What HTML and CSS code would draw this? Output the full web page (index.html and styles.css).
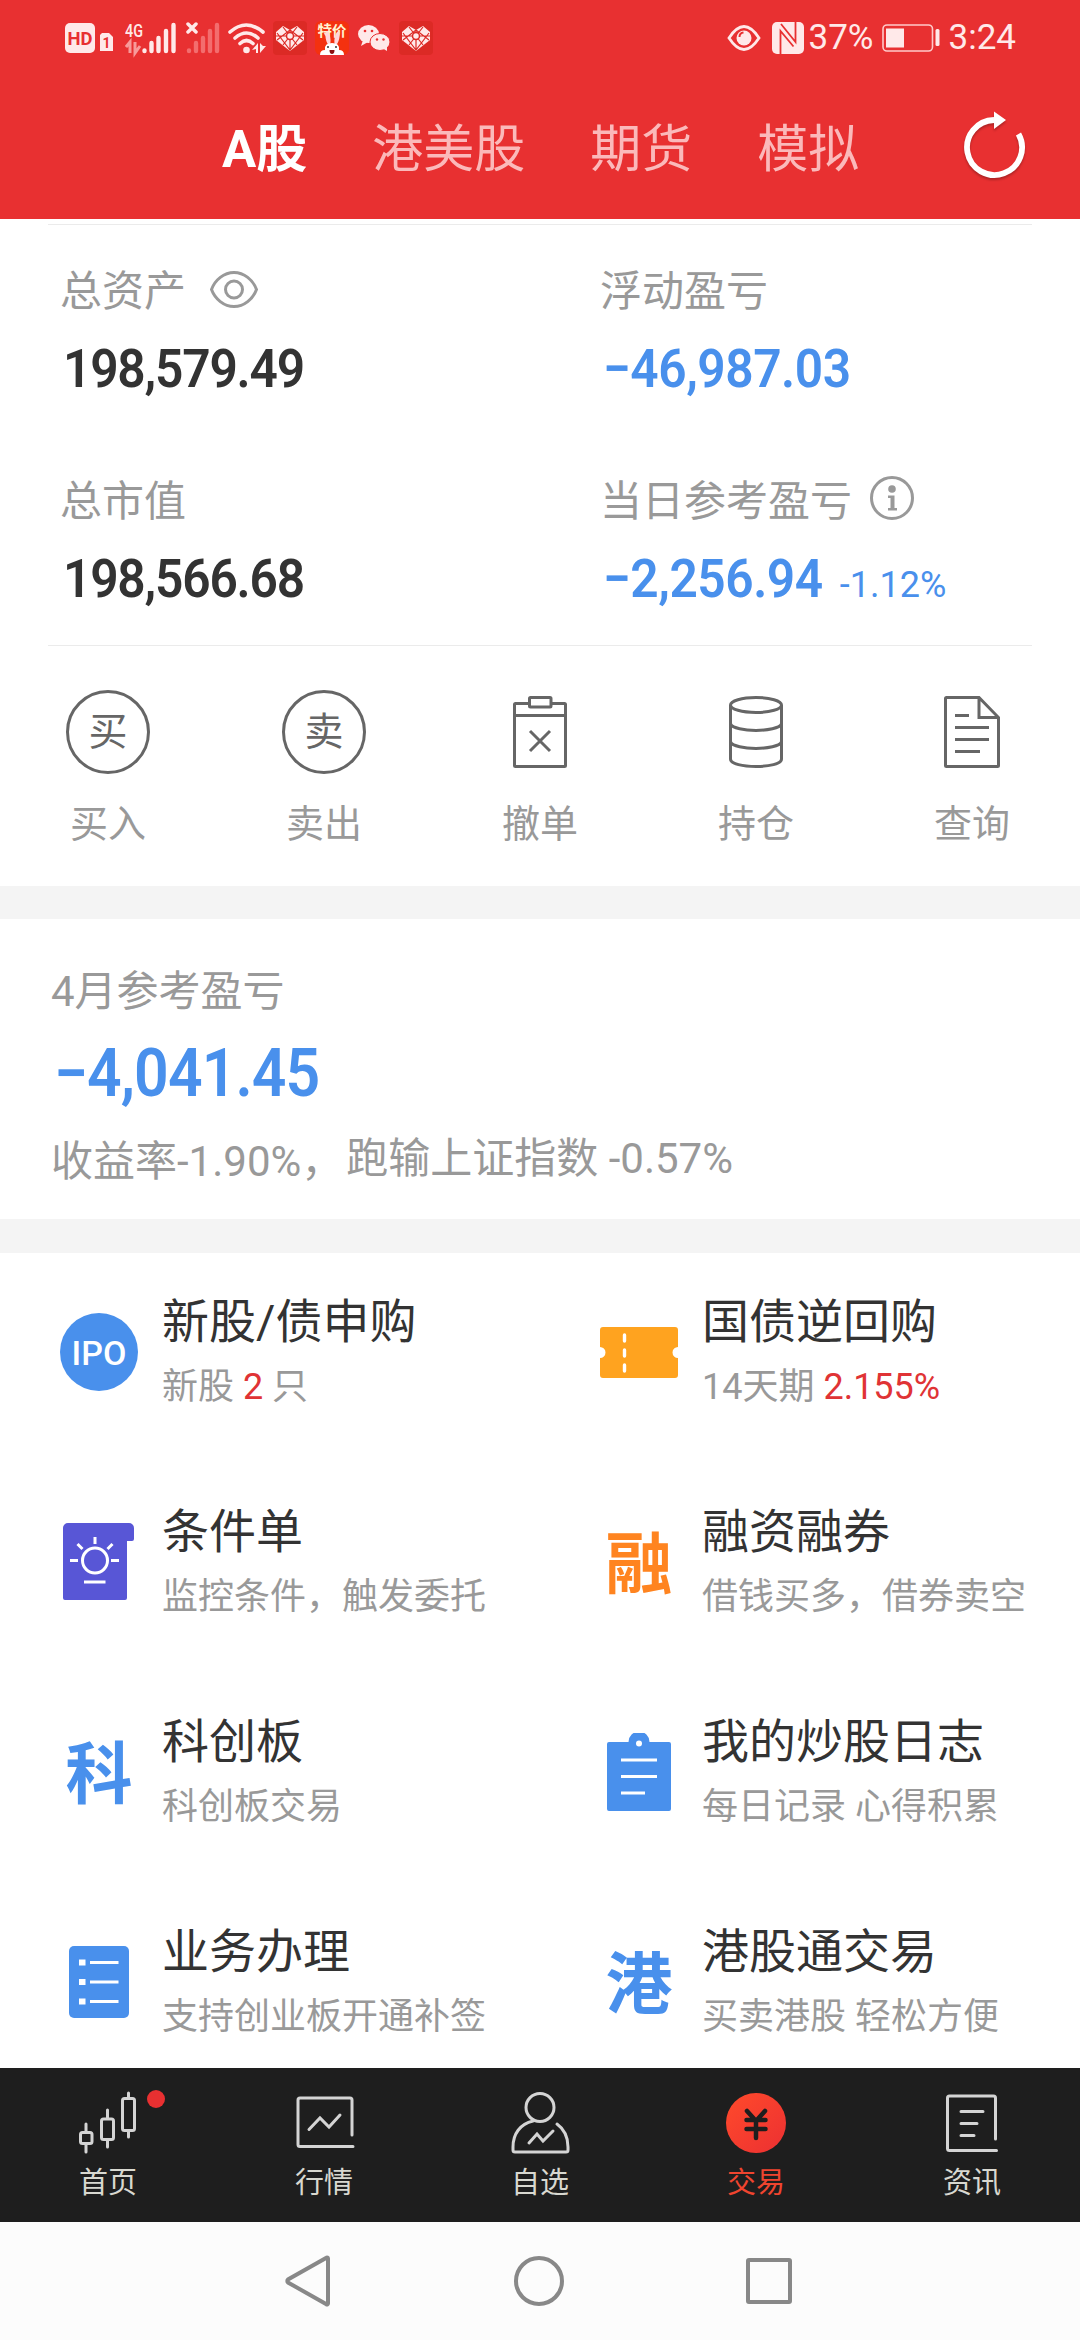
FILE: index.html
```html
<!DOCTYPE html>
<html lang="zh-CN">

<head>
    <meta charset="UTF-8" />
    <meta name="viewport" content="width=device-width, initial-scale=1.0" />
    <title>交易</title>
    <link rel="stylesheet" href="styles.css">
</head>

<body>
    <header class="header">
        <div class="status">
            <div class="status-left">
                <svg class="hd" width="48" height="36" viewBox="65 20 48 36">
                    <rect x="65" y="23" width="30" height="30" rx="5" fill="#ffe9e9" />
                    <text x="80" y="45" text-anchor="middle" font-size="19" font-weight="700" textLength="25" lengthAdjust="spacingAndGlyphs" fill="#e83031">HD</text>
                    <path d="M102 33h7l4 4v14h-13v-16z" fill="#ffe9e9" />
                    <text x="106.500" y="47.500" text-anchor="middle" font-size="14" font-weight="700" fill="#e83031">1</text>
                </svg>
                <svg class="signal" width="52" height="44" viewBox="125 15 52 44">
                    <text x="125" y="36" font-size="18" font-weight="500" textLength="18" lengthAdjust="spacingAndGlyphs" fill="#ffe9e9">4G</text>
                    <path d="M126 46l4-5v11M135 41v11l5-7" stroke="#f79a9a" stroke-width="3" fill="none" />
                    <path d="M144.500 49.500v.5M151.500 42v8M158.500 37v13M166 30v20M173.500 24v26" stroke="#ffe9e9" stroke-width="4.400" stroke-linecap="round" />
                </svg>
                <svg class="signal2" width="34" height="32" viewBox="186 21 34 32">
                    <path d="M188 23l8 8M196 23l-8 8" stroke="#ffe9e9" stroke-width="3.500" stroke-linecap="round" />
                    <path d="M189 49.500v.5M196 42v8M203 37v13M210 30v20M217 24v26" stroke="#f36d6e" stroke-width="4.400" stroke-linecap="round" />
                </svg>
                <svg class="wifi" width="38" height="32" viewBox="228 21 38 32">
                    <g fill="none" stroke="#ffe9e9" stroke-width="3.600" stroke-linecap="round">
                        <path d="M230 31q16-14 33 0M235 37q11.500-10 23 0M240 42.500q6.500-6 13 0" />
                    </g>
                    <circle cx="246.500" cy="49" r="3.300" fill="#ffe9e9" />
                    <path d="M252 49l6-7v10h-2v-4zM260 42v10l6-7h-3z" fill="#ffe9e9" />
                </svg>
                <svg class="heart" width="34" height="34" viewBox="0 0 34 34">
                    <rect width="34" height="34" rx="4" fill="#dc2a25" />
                    <path d="M10 5l7 4 7-4 7 6v8L17 30 3 19v-8z" fill="#ffe9e9" />
                    <path d="M10 6l14 18M24 6L10 24M4 12l13 17 13-17M3 15h28M17 9v20M4 19l13-10 13 10" stroke="#dc2a25" stroke-width="1.200" fill="none" />
                    <circle cx="17" cy="15" r="3.500" fill="#ffe9e9" stroke="#dc2a25" stroke-width="1.500" />
                </svg>
                <svg class="rabbit" width="34" height="34" viewBox="0 0 34 34">
                    <rect width="34" height="34" rx="6" fill="#f4310f" />
                    <text x="17" y="14.500" text-anchor="middle" font-size="14.500" font-weight="700" fill="#fff3d0">特价</text>
                    <ellipse cx="13" cy="17" rx="2.300" ry="7" fill="#ffd6da" transform="rotate(-10 13 17)" />
                    <ellipse cx="22" cy="17" rx="2.300" ry="7" fill="#ffd6da" transform="rotate(12 22 17)" />
                    <path d="M5 34q0-5 5-5-1-7 7-7t7 7q5 0 5 5z" fill="#fff" />
                    <circle cx="13" cy="26" r="1" fill="#333" />
                    <circle cx="21" cy="26" r="1" fill="#333" />
                    <path d="M14.500 29h5q0 4-2.500 4t-2.500-4z" fill="#8c1010" />
                </svg>
                <svg class="wechat" width="34" height="32" viewBox="357 22 34 32">
                    <ellipse cx="368.500" cy="34" rx="10.500" ry="9" fill="#ffe9e9" />
                    <path d="M363 40l-2 6 7-4z" fill="#ffe9e9" />
                    <ellipse cx="380" cy="42" rx="10" ry="8.500" fill="#ffe9e9" stroke="#e83031" stroke-width="1" />
                    <path d="M382 48l5 3v-5z" fill="#ffe9e9" />
                    <g fill="#e83031">
                        <circle cx="365" cy="31" r="1.300" />
                        <circle cx="372" cy="31" r="1.300" />
                        <circle cx="377" cy="39.500" r="1.200" />
                        <circle cx="383.500" cy="39.500" r="1.200" />
                    </g>
                </svg>
                <svg class="heart" width="34" height="34" viewBox="0 0 34 34">
                    <rect width="34" height="34" rx="4" fill="#dc2a25" />
                    <path d="M10 5l7 4 7-4 7 6v8L17 30 3 19v-8z" fill="#ffe9e9" />
                    <path d="M10 6l14 18M24 6L10 24M4 12l13 17 13-17M3 15h28M17 9v20M4 19l13-10 13 10" stroke="#dc2a25" stroke-width="1.200" fill="none" />
                    <circle cx="17" cy="15" r="3.500" fill="#ffe9e9" stroke="#dc2a25" stroke-width="1.500" />
                </svg>
            </div>
            <div class="status-right">
                <svg width="34" height="28" viewBox="0 0 34 28">
                    <path d="M2 14Q17-9 32 14 17 37 2 14z" fill="none" stroke="#ffe9e9" stroke-width="2.800" />
                    <circle cx="17" cy="14" r="7.500" fill="#ffe9e9" />
                    <path d="M12.500 13q0-4 4-4.500" fill="none" stroke="#e83031" stroke-width="2" />
                </svg>
                <svg class="nfc" width="32" height="32" viewBox="0 0 32 32">
                    <rect width="32" height="32" rx="5" fill="#ffe9e9" />
                    <path d="M8.500 32V9l13 15.500M23.500 0v20L9 2" fill="none" stroke="#e83031" stroke-width="1.800" />
                </svg>
                <span class="percent">37%</span>
                <svg class="battery" width="60" height="28" viewBox="0 0 60 28">
                    <rect x="1" y="1" width="49.500" height="26" rx="4" fill="none" stroke="#ffc9c9" stroke-width="1.600" />
                    <rect x="4" y="4.500" width="18" height="19" fill="#ffe9e9" />
                    <rect x="53.500" y="5" width="4" height="17" rx="1.500" fill="#ffe9e9" />
                </svg>
                <span class="time">3:24</span>
            </div>
        </div>
        <nav class="tabs">
            <a class="tab active">A股</a>
            <a class="tab">港美股</a>
            <a class="tab">期货</a>
            <a class="tab">模拟</a>
            <svg class="refresh" width="70" height="76" viewBox="959 110 70 76">
                <path d="M1017.500 134a27.500 27.500 0 1 1-24.500-14" fill="none" stroke="#fff" stroke-width="5.800" />
                <path d="M993 111.500l12 8.500-12 9z" fill="#fff" />
            </svg>
        </nav>
    </header>

    <section class="account">
        <div class="cell">
            <div class="label"><span>总资产</span>
                <svg class="eye" width="48" height="37" viewBox="0 0 48 37">
                    <path d="M1.500 18.500C5 9 14 1.500 24 1.500S43 9 46.500 18.500C43 28 34 35.500 24 35.500S5 28 1.500 18.500z" />
                    <circle cx="24" cy="18.500" r="8.500" />
                </svg>
            </div>
            <div class="num"><span>198,579.49</span></div>
        </div>
        <div class="cell">
            <div class="label"><span>浮动盈亏</span></div>
            <div class="num blue"><span>−46,987.03</span></div>
        </div>
        <div class="cell">
            <div class="label"><span>总市值</span></div>
            <div class="num"><span>198,566.68</span></div>
        </div>
        <div class="cell">
            <div class="label"><span>当日参考盈亏</span>
                <svg class="info" width="44" height="44" viewBox="0 0 44 44">
                    <circle cx="22" cy="22" r="20.500" />
                    <circle class="fill" cx="22" cy="13" r="3.800" />
                    <path class="fill" d="M18 19.500h6.500v12.500H27v2.500h-9V32h2.500v-10H18z" />
                </svg>
            </div>
            <div class="num blue"><span>−2,256.94</span><small>-1.12%</small></div>
        </div>
    </section>

    <section class="actions">
        <a class="action">
            <span class="round">买</span>
            <span>买入</span>
        </a>
        <a class="action">
            <span class="round">卖</span>
            <span>卖出</span>
        </a>
        <a class="action">
            <svg width="84" height="84" viewBox="498 690 84 84">
                <path d="M529.500 703.500H515.500a1 1 0 0 0-1 1V765.500a1 1 0 0 0 1 1h49a1 1 0 0 0 1-1V704.500a1 1 0 0 0-1-1H551.500M514.500 715.500h51" />
                <rect x="529.500" y="697.500" width="21.500" height="9.500" rx="1" />
                <path d="M530 731l20 20M550 731l-20 20" />
            </svg>
            <span>撤单</span>
        </a>
        <a class="action">
            <svg width="84" height="84" viewBox="714 690 84 84">
                <ellipse cx="756" cy="705" rx="25.500" ry="7.500" />
                <path d="M730.500 705v54c0 10 51 10 51 0v-54M730.500 724c4 8.500 47 8.500 51 0M730.500 742c4 8.500 47 8.500 51 0" />
            </svg>
            <span>持仓</span>
        </a>
        <a class="action">
            <svg width="84" height="84" viewBox="930 690 84 84">
                <path d="M979 697.500H946.500a1 1 0 0 0-1 1V765.500a1 1 0 0 0 1 1H997.500a1 1 0 0 0 1-1V717.500zV717.500H998.500M955 715.500h14M955 727.500h34M955 739.500h34M955 751.500h25" />
            </svg>
            <span>查询</span>
        </a>
    </section>

    <section class="month">
        <div class="month-label">4月参考盈亏</div>
        <div class="num big blue"><span>−4,041.45</span></div>
        <div class="month-text"><span class="yield">收益率-1.90%，</span><span>跑输上证指数 -0.57%</span></div>
    </section>

    <section class="services">
        <a class="item">
            <div class="icon"><span class="ipo">IPO</span></div>
            <div>
                <h3>新股/债申购</h3>
                <p>新股 <em>2</em> 只</p>
            </div>
        </a>
        <a class="item">
            <div class="icon">
                <svg width="78" height="51" viewBox="0 0 78 51">
                    <path d="M3 0h72a3 3 0 0 1 3 3v17a5.500 5.500 0 0 0 0 11v17a3 3 0 0 1-3 3H3a3 3 0 0 1-3-3V31a5.500 5.500 0 0 0 0-11V3a3 3 0 0 1 3-3z" fill="#ffa31f" />
                    <path d="M24.500 8v6M24.500 23v6M24.500 38v6" stroke="#fff" stroke-width="3.400" stroke-linecap="round" />
                </svg>
            </div>
            <div>
                <h3>国债逆回购</h3>
                <p>14天期 <em>2.155%</em></p>
            </div>
        </a>
        <a class="item">
            <div class="icon">
                <svg width="78" height="78" viewBox="60 1523 78 78">
                    <path d="M68 1523h61a5 5 0 0 1 5 5v11a2 2 0 0 1-2 2h-5v57a2 2 0 0 1-2 2H65a2 2 0 0 1-2-2v-70a5 5 0 0 1 5-5z" fill="#5856d6" />
                    <g fill="none" stroke="#fff" stroke-width="3">
                        <circle cx="95" cy="1560.500" r="12.500" />
                        <path d="M95 1537v7M70 1560.500h8M111 1560.500h8M77.500 1544l5 5M112.500 1544l-5 5M84 1582h21.500" />
                    </g>
                </svg>
            </div>
            <div>
                <h3>条件单</h3>
                <p>监控条件，触发委托</p>
            </div>
        </a>
        <a class="item">
            <div class="icon"><span class="glyph orange">融</span></div>
            <div>
                <h3>融资融券</h3>
                <p>借钱买多，借券卖空</p>
            </div>
        </a>
        <a class="item">
            <div class="icon"><span class="glyph">科</span></div>
            <div>
                <h3>科创板</h3>
                <p>科创板交易</p>
            </div>
        </a>
        <a class="item">
            <div class="icon">
                <svg width="78" height="78" viewBox="600 1733 78 78">
                    <path d="M609 1742h19.500a10.500 10.500 0 0 1 21 0H669a2 2 0 0 1 2 2v65a2 2 0 0 1-2 2h-60a2 2 0 0 1-2-2v-65a2 2 0 0 1 2-2z" fill="#4990ec" />
                    <circle cx="639" cy="1743.500" r="3" fill="#fff" />
                    <path d="M621 1760h36M621 1776.500h36M621 1793h24" stroke="#fff" stroke-width="3" />
                </svg>
            </div>
            <div>
                <h3>我的炒股日志</h3>
                <p>每日记录 心得积累</p>
            </div>
        </a>
        <a class="item">
            <div class="icon">
                <svg width="60" height="72" viewBox="0 0 60 72">
                    <rect width="60" height="72" rx="5" fill="#4990ec" />
                    <path d="M10 16.500h6.500M10 36h6.500M10 55.500h6.500" stroke="#fff" stroke-width="6" />
                    <path d="M21 16.500h28.500M21 36h28.500M21 55.500h28.500" stroke="#fff" stroke-width="3" />
                </svg>
            </div>
            <div>
                <h3>业务办理</h3>
                <p>支持创业板开通补签</p>
            </div>
        </a>
        <a class="item">
            <div class="icon"><span class="glyph">港</span></div>
            <div>
                <h3>港股通交易</h3>
                <p>买卖港股 轻松方便</p>
            </div>
        </a>
    </section>

    <nav class="tabbar">
        <a class="tabbar-item">
            <svg width="80" height="64" viewBox="68 2090 80 64">
                <path d="M86 2124v8M86 2144v8M107.500 2110v8M107.500 2140v7M128.500 2093v5M128.500 2131v6" />
                <rect x="80.500" y="2132.500" width="11.500" height="11" rx="2" />
                <rect x="101.500" y="2119" width="12" height="20.500" rx="2" />
                <rect x="122.500" y="2098.500" width="12" height="32" rx="2" />
            </svg>
            <span>首页</span>
            <i class="badge"></i>
        </a>
        <a class="tabbar-item">
            <svg width="80" height="64" viewBox="284 2090 80 64">
                <path d="M352 2135v-35a2 2 0 0 0-2-2H300a2 2 0 0 0-2 2v44.500a2 2 0 0 0 2 2h53M309 2129.500l11-11.500 9 9 11-12" />
            </svg>
            <span>行情</span>
        </a>
        <a class="tabbar-item">
            <svg width="80" height="64" viewBox="500 2090 80 64">
                <circle cx="540" cy="2107.500" r="14" />
                <path d="M533 2121c-13 3-20 13-20 26v3a2 2 0 0 0 2 2h51a2 2 0 0 0 2-2v-3c0-10-4-18-11-23M529 2143l8-9 6 7 10-10" />
            </svg>
            <span>自选</span>
        </a>
        <a class="tabbar-item active">
            <svg width="80" height="64" viewBox="716 2090 80 64">
                <defs>
                    <linearGradient id="trade" x1="0" y1="0" x2="1" y2="1">
                        <stop offset="0" stop-color="#ff4a2b" />
                        <stop offset="1" stop-color="#ec3032" />
                    </linearGradient>
                </defs>
                <circle class="disc" cx="756" cy="2123" r="30" fill="url(#trade)" />
                <path class="yen" d="M747 2111l9 10 9-10M746.500 2120h19M746.500 2129h19M756 2120v18" />
            </svg>
            <span>交易</span>
        </a>
        <a class="tabbar-item">
            <svg width="80" height="64" viewBox="932 2090 80 64">
                <path d="M995.500 2139v-41a2 2 0 0 0-2-2H949.500a2 2 0 0 0-2 2v50.500a2 2 0 0 0 2 2h47M961 2111.500h22M961 2123.500h16M961 2135.500h13" />
            </svg>
            <span>资讯</span>
        </a>
    </nav>

    <footer class="sysnav">
        <svg width="50" height="54" viewBox="2 0 50 54"><path d="M46 4.500v45a1 1 0 0 1-1.600.8L6 28.500a2 2 0 0 1 0-3L44.400 3.700A1 1 0 0 1 46 4.500z" /></svg>
        <svg width="54" height="54" viewBox="0 0 54 54"><circle cx="27" cy="27" r="23" /></svg>
        <svg width="50" height="54" viewBox="0 0 50 54"><rect x="4" y="6" width="42" height="42" rx="1" /></svg>
    </footer>
</body>

</html>
```
FILE: styles.css
```css
* {
    box-sizing: border-box;
    margin: 0;
    padding: 0;
}

body {
    width: 1080px;
    height: 2340px;
    overflow: hidden;
    font-family: Roboto, 'Noto Sans CJK SC', sans-serif;
    background-color: #fff;
    color: #333;
}

svg {
    display: block;
    flex: none;
}

.header {
    height: 219px;
    background-color: #e83031;
}

.status {
    display: flex;
    justify-content: space-between;
    height: 76px;
    padding: 0 64px 0 65px;
}

.status-left,
.status-right {
    display: flex;
    align-items: center;
}

.signal {
    margin-left: 12px;
}

.signal2 {
    margin-left: 9px;
}

.wifi,
.heart,
.rabbit,
.wechat {
    margin-left: 8px;
}

.wifi + .heart {
    margin-left: 7px;
}

.nfc {
    margin-left: 11px;
}

.percent,
.time {
    color: #ffe9e9;
    font-size: 35px;
    line-height: 76px;
}

.percent {
    margin-left: 5px;
}

.battery {
    margin: 0 7px 0 8px;
}

.tabs {
    display: flex;
    align-items: center;
    height: 143px;
    padding-left: 222px;
}

.tab {
    padding-top: 4px;
    margin-right: 65px;
    font-size: 51px;
    line-height: 80px;
    color: #fbb9ba;
}

.tab.active {
    font-weight: 700;
    color: #fff;
}

.refresh {
    margin-left: 36px;
    filter: drop-shadow(0 2px 1px rgba(0, 0, 0, 0.25));
}

.account {
    display: grid;
    grid-template-columns: 540px 444px;
    grid-auto-rows: 210px;
    margin: 5px 48px 0;
    border-top: 1px solid #ebebeb;
    border-bottom: 1px solid #ebebeb;
}

.cell {
    padding: 34px 0 0 12px;
}

.label {
    display: flex;
    align-items: center;
    height: 60px;
    margin-bottom: 20px;
    font-size: 42px;
    color: #999;
}

.label span {
    padding-bottom: 3px;
}

.label svg {
    fill: none;
    stroke: #999;
    stroke-width: 3;
}

.label .fill {
    fill: #999;
    stroke: none;
}

.eye {
    margin-left: 24px;
}

.info {
    margin-left: 18px;
    margin-bottom: 2px;
}

.num {
    height: 60px;
    padding-left: 3px;
    font-size: 54px;
    font-weight: 600;
    letter-spacing: -1.3px;
    line-height: 60px;
    white-space: nowrap;
}

/* narrow the digits */
.num span {
    display: inline-block;
    transform: scaleX(0.92);
    transform-origin: left;
}

.blue {
    color: #4990ec;
    letter-spacing: -0.5px;
}

.num small {
    margin-left: -2px;
    font-size: 36px;
    font-weight: 400;
    letter-spacing: 0;
}

.actions {
    display: flex;
    height: 240px;
    padding-top: 44px;
}

.action {
    display: flex;
    flex: 1;
    flex-direction: column;
    align-items: center;
    font-size: 38px;
    line-height: 50px;
    color: #999;
}

.action svg,
.round {
    width: 84px;
    height: 84px;
    margin-bottom: 25px;
    fill: none;
    stroke: #666;
    stroke-width: 3;
}

.round {
    border: 3px solid #666;
    border-radius: 50%;
    font-size: 39px;
    line-height: 79px;
    text-align: center;
    color: #666;
    stroke: none;
}

.month {
    height: 367px;
    padding: 43px 51px 0;
    border-top: 33px solid #f4f4f4;
    border-bottom: 34px solid #f4f4f4;
    color: #999;
    font-size: 42px;
    line-height: 60px;
}

.big {
    height: 80px;
    margin: 12px 0 15px;
    font-size: 66px;
    line-height: 80px;
    letter-spacing: -1px;
}

.month-text {
    display: flex;
    align-items: flex-start;
}

.yield {
    padding-top: 3px;
    margin-right: 3px;
}

.services {
    display: grid;
    grid-template-columns: 540px 540px;
    grid-auto-rows: 210px;
    height: 815px;
    overflow: hidden;
}

.item {
    display: flex;
    align-items: center;
    padding: 0 0 12px 60px;
}

.icon {
    display: flex;
    justify-content: center;
    align-items: center;
    width: 78px;
    height: 78px;
    margin-right: 24px;
}

.ipo {
    width: 78px;
    height: 78px;
    border-radius: 50%;
    background-color: #4990ec;
    font-size: 34px;
    font-weight: 500;
    line-height: 80px;
    text-align: center;
    color: #fff;
}

.glyph {
    padding-bottom: 7px;
    font-family: 'Noto Sans CJK SC', sans-serif;
    font-size: 67px;
    font-weight: 700;
    line-height: 78px;
    color: #4990ec;
}

.orange {
    color: #ff8420;
}

.item h3 {
    margin-bottom: 10px;
    font-size: 47px;
    font-weight: 400;
    line-height: 60px;
}

.item p {
    font-size: 36px;
    line-height: 50px;
    color: #999;
}

.item em {
    font-style: normal;
    color: #e03335;
}

.tabbar {
    display: flex;
    height: 154px;
    padding-top: 22px;
    background-color: #1e1e1e;
}

.tabbar-item {
    position: relative;
    display: flex;
    flex: 1;
    flex-direction: column;
    align-items: center;
    font-size: 29px;
    line-height: 40px;
    color: #d8d8d0;
}

.tabbar-item svg {
    margin-bottom: 9px;
    fill: none;
    stroke: #d4d4d4;
    stroke-width: 3;
    stroke-linecap: round;
}

.tabbar-item .disc {
    fill: url(#trade);
    stroke: none;
}

.tabbar-item .yen {
    stroke: #1e1e1e;
    stroke-width: 4.5;
}

.tabbar-item.active {
    color: #f0452f;
}

.badge {
    position: absolute;
    top: 0;
    left: 147px;
    width: 18px;
    height: 18px;
    border-radius: 50%;
    background-color: #e83031;
}

.sysnav {
    display: flex;
    justify-content: center;
    align-items: center;
    gap: 178px;
    height: 118px;
    background-color: #fcfcfc;
}

.sysnav svg {
    overflow: visible;
    fill: none;
    stroke: #888;
    stroke-width: 4;
}

.sysnav svg:first-child {
    margin-left: -2px;
}
```
